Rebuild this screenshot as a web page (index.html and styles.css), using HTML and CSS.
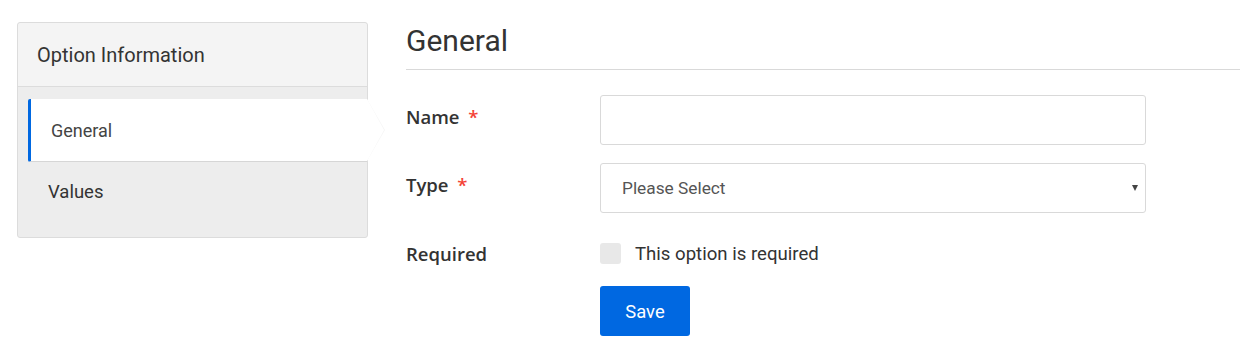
FILE: index.html
```html
<!DOCTYPE html>
<html lang="en">
<head>
    <meta charset="UTF-8">
    <title>Option</title>
    <link rel="stylesheet" href="styles.css">
</head>
<body>
    <div class="page">
        <aside class="sidebar">
            <div class="sidebar-header">Option Information</div>
            <ul class="sidebar-tabs">
                <li class="tab active">General</li>
                <li class="tab">Values</li>
            </ul>
        </aside>

        <main class="content">
            <h2 class="section-title">General</h2>

            <div class="form-row">
                <label class="form-label">Name <span class="req">*</span></label>
                <input type="text" class="form-control">
            </div>

            <div class="form-row">
                <label class="form-label">Type <span class="req">*</span></label>
                <div class="select-wrap">
                    <select class="form-control">
                        <option>Please Select</option>
                    </select>
                </div>
            </div>

            <div class="form-row row-check">
                <label class="form-label">Required</label>
                <label class="check">
                    <span class="check-box"></span>
                    This option is required
                </label>
            </div>

            <div class="form-row row-actions">
                <span class="form-label"></span>
                <button class="btn-primary">Save</button>
            </div>
        </main>
    </div>
</body>
</html>
```

FILE: styles.css
```css
/* --- Base --- */
body {
    margin: 0;
    font-family: Roboto, "Liberation Sans", sans-serif;
    color: #333;
    background: #fff;
}

.page {
    display: flex;
    align-items: flex-start;
    gap: 38px;
    padding: 22px 0 0 17px;
}

/* --- Sidebar --- */
.sidebar {
    width: 349px;
    flex-shrink: 0;
    border: 1px solid #dcdcdc;
    border-radius: 3px;
    background: #ededed;
}

.sidebar-header {
    height: 63px;
    line-height: 64px;
    padding-left: 19px;
    font-size: 20px;
    color: #333;
    background: #f4f4f4;
    border-bottom: 1px solid #dcdcdc;
    border-radius: 3px 3px 0 0;
}

.sidebar-tabs {
    list-style: none;
    margin: 0;
    padding: 12px 0 0 10px;
}

.tab {
    height: 75px;
    line-height: 60px;
    padding-left: 30px;
    font-size: 18.5px;
    color: #333;
    margin-left: -10px;
}

.tab.active {
    position: relative;
    height: 62px;
    line-height: 63px;
    margin-left: 0;
    padding-left: 20px;
    font-size: 18px;
    color: #444;
    background: #fff;
    border-left: 3px solid #0068e1;
    border-radius: 2px 0 0 2px;
    border-bottom: 1px solid #d6d6d6;
}

/* arrow pointing at the form */
.tab.active::before,
.tab.active::after {
    content: "";
    position: absolute;
    top: 0;
    height: 62px;
    clip-path: polygon(0 0, 100% 50%, 0 100%);
}

.tab.active::before {
    right: -18px;
    width: 18px;
    background: #f6f6f6;
}

.tab.active::after {
    right: -17px;
    width: 17px;
    background: #fff;
}

/* --- Form --- */
.content {
    flex: 1;
}

.section-title {
    margin: 0;
    height: 47px;
    font-size: 30px;
    font-weight: 400;
    line-height: 37px;
    color: #333;
    border-bottom: 1px solid #d9d9d9;
}

.form-row {
    display: flex;
    align-items: center;
}

.form-row:nth-of-type(1) {
    margin-top: 25px;
}

.form-row + .form-row {
    margin-top: 18px;
}

.form-label {
    width: 194px;
    flex-shrink: 0;
    font-family: "Open Sans", "Liberation Sans", sans-serif;
    font-weight: 600;
    font-size: 18.5px;
    color: #333;
    position: relative;
    top: -4px;
}

.req {
    color: #f44336;
    margin-left: 4px;
}

.form-control {
    box-sizing: border-box;
    width: 546px;
    height: 50px;
    border: 1px solid #d9d9d9;
    border-radius: 3px;
    background: #fff;
    font-family: Roboto, sans-serif;
    font-size: 17.3px;
    color: #555;
    padding: 0 21px;
    margin: 0;
}

.select-wrap {
    position: relative;
}

.select-wrap select {
    appearance: none;
    -webkit-appearance: none;
}

.select-wrap::after {
    content: "";
    position: absolute;
    right: 8px;
    top: 22px;
    border-left: 3.5px solid transparent;
    border-right: 3.5px solid transparent;
    border-top: 6px solid #444;
    pointer-events: none;
}

.row-check {
    margin-top: 28px !important;
}

.row-check .form-label {
    top: 0;
}

.check {
    display: flex;
    align-items: center;
    gap: 14px;
    font-size: 18.6px;
    color: #333;
}

.check-box {
    width: 21px;
    height: 21px;
    background: #e8e8e8;
    border-radius: 3px;
}

.row-actions {
    margin-top: 20px !important;
}

.btn-primary {
    width: 90px;
    height: 50px;
    border: none;
    border-radius: 3px;
    background: #0068e1;
    color: #fff;
    font-family: Roboto, sans-serif;
    font-size: 18.4px;
}
```
